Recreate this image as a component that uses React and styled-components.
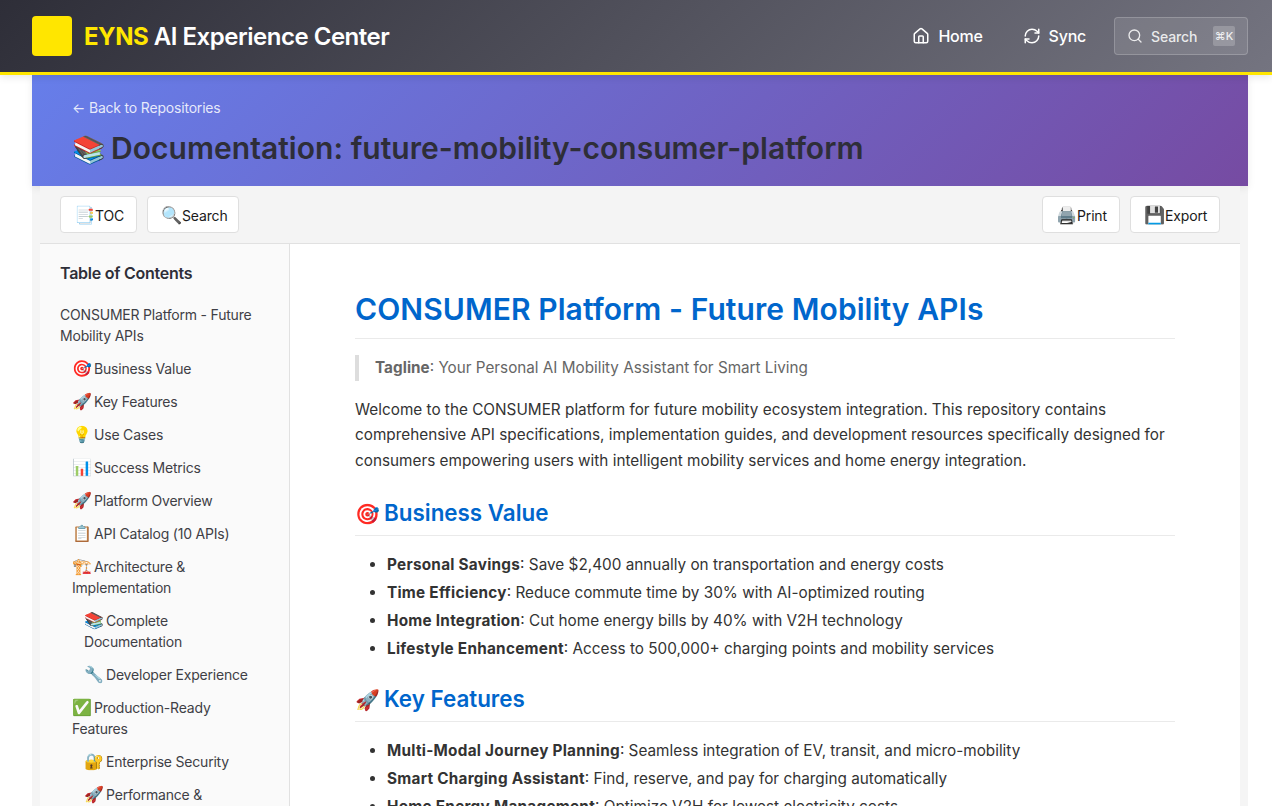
import React from "react";
import styled, { createGlobalStyle } from "styled-components";
import { Home, RefreshCw, Search } from "lucide-react";

const Global = createGlobalStyle`
  * { box-sizing: border-box; }
  html, body { margin: 0; height: 100%; overflow: hidden; background: #fff; }
  body { font-family: Inter, "Liberation Sans", sans-serif; color: #333; }
`;

const Page = styled.div`
  height: 806px;
  overflow: hidden;
`;

const TopBar = styled.header`
  position: relative;
  z-index: 2;
  height: 75px;
  padding: 0 24px 0 32px;
  display: flex;
  align-items: center;
  justify-content: space-between;
  background: linear-gradient(135deg, #2e2e38 0%, #747480 100%);
  border-bottom: 3px solid #ffe600;
  box-shadow: 0 2px 8px rgba(0, 0, 0, 0.1);
`;

const Brand = styled.div`
  display: flex;
  align-items: center;
  gap: 12px;
`;

const LogoBox = styled.div`
  width: 40px;
  height: 40px;
  border-radius: 4px;
  background: #ffe600;
`;

const BrandText = styled.div`
  font-size: 24px;
  line-height: 29px;
  margin-top: 1px;
  font-weight: 600;
  letter-spacing: -0.48px;
  color: #fff;
  span { color: #ffe600; font-weight: 700; }
`;

const Nav = styled.nav`
  display: flex;
  align-items: center;
`;

const NavLink = styled.a`
  display: flex;
  align-items: center;
  gap: 8px;
  margin-right: ${(p) => p.$gap}px;
  font-size: 16px;
  font-weight: 500;
  letter-spacing: -0.25px;
  color: #fff;
`;

const SearchBox = styled.div`
  width: 134px;
  height: 38px;
  padding: 0 12px;
  display: flex;
  align-items: center;
  gap: 8px;
  font-size: 14px;
  font-weight: 500;
  letter-spacing: -0.1px;
  color: rgba(255, 255, 255, 0.85);
  background: rgba(255, 255, 255, 0.1);
  border: 1px solid rgba(255, 255, 255, 0.2);
  border-radius: 4px;
`;

const Kbd = styled.span`
  margin-left: auto;
  width: 22px;
  height: 20px;
  display: flex;
  align-items: center;
  justify-content: center;
  font-size: 11px;
  background: rgba(255, 255, 255, 0.2);
  border-radius: 2px;
`;

const Shell = styled.main`
  margin: 0 24px 0 32px;
  background: #f5f5f5;
`;

const Hero = styled.section`
  height: 111px;
  padding: 24px 40px 0;
  background: linear-gradient(135deg, #667eea 0%, #764ba2 100%);
  box-shadow: 0 2px 8px rgba(0, 0, 0, 0.08);
`;

const BackLink = styled.a`
  display: block;
  font-size: 14px;
  line-height: 17px;
  letter-spacing: -0.19px;
  color: rgba(255, 255, 255, 0.85);
`;

const HeroTitle = styled.h1`
  margin: 13px 0 0;
  font-size: 30px;
  line-height: 39px;
  letter-spacing: 0.04px;
  font-weight: 600;
  color: #2e2e38;
`;

// emoji glyphs here are narrower than the installed colour font, so each gets its own box
const Emoji = styled.span`
  display: inline-block;
  width: ${(p) => p.$w}px;
  font-size: ${(p) => p.$s}px;
  line-height: 1;
  font-weight: 400;
  letter-spacing: 0;
`;

const DocPanel = styled.div`
  margin: 0 8px;
  background: #fff;
`;

const Toolbar = styled.div`
  height: 58px;
  padding: 10px 20px;
  display: flex;
  justify-content: space-between;
  background: #f4f4f4;
  border-bottom: 1px solid #e1e1e1;
`;

const ToolGroup = styled.div`
  display: flex;
  gap: 10px;
`;

const ToolButton = styled.button`
  width: ${(p) => p.$w}px;
  height: 37px;
  padding: 2px 0 0 12px;
  display: flex;
  align-items: center;
  font-family: inherit;
  font-size: 14px;
  letter-spacing: -0.15px;
  color: #1a1a1a;
  background: #fff;
  border: 1px solid #dfdfdf;
  border-radius: 4px;
`;

const Columns = styled.div`
  display: grid;
  grid-template-columns: 250px 1fr;
`;

const Sidebar = styled.aside`
  height: 562px;
  overflow: hidden;
  padding: 20px 24px 0 20px;
  background: #fafafa;
  border-right: 1px solid #e1e1e1;
`;

const SideTitle = styled.h3`
  margin: 0 0 21px;
  font-size: 16px;
  line-height: 19px;
  letter-spacing: -0.25px;
  font-weight: 600;
  color: #2e2e38;
`;

const TocItem = styled.a`
  display: block;
  margin-bottom: 12px;
  padding-left: ${(p) => p.$level * 12}px;
  font-size: 14px;
  line-height: 21px;
  letter-spacing: -0.2px;
  color: #3f3f46;
`;

const Article = styled.article`
  height: 562px;
  overflow: hidden;
  padding: 43px 65px 0;
  font-size: 15.32px;
  line-height: 25.6px;
  color: #333;
  strong { letter-spacing: 0.25px; }
`;

const H1 = styled.h1`
  margin: 0 0 16px;
  padding-bottom: 6px;
  font-size: 30px;
  line-height: 45px;
  letter-spacing: 0.08px;
  font-weight: 600;
  color: #0066cc;
  border-bottom: 1px solid #eaeaea;
`;

const H2 = styled.h2`
  margin: 23px 0 16px;
  padding-bottom: 6.5px;
  font-size: 22.4px;
  line-height: 30px;
  font-weight: 600;
  color: #0066cc;
  border-bottom: 1px solid #eaeaea;
`;

const Quote = styled.blockquote`
  margin: 0 0 16px;
  padding: 0 16px;
  font-size: 15.25px;
  color: #666;
  border-left: 4px solid #ddd;
  strong { letter-spacing: 0.05px; }
`;

const Para = styled.p`
  margin: 0 0 25px;
`;

const List = styled.ul`
  margin: 0 0 16px;
  padding-left: 32px;
  li { margin-top: 2.4px; }
`;

const toc = [
  [0, "", "CONSUMER Platform - Future Mobility APIs"],
  [1, "🎯", "Business Value"],
  [1, "🚀", "Key Features"],
  [1, "💡", "Use Cases"],
  [1, "📊", "Success Metrics"],
  [1, "🚀", "Platform Overview"],
  [1, "📋", "API Catalog (10 APIs)"],
  [1, "🏗️", "Architecture & Implementation"],
  [2, "📚", "Complete Documentation"],
  [2, "🔧", "Developer Experience"],
  [1, "✅", "Production-Ready Features"],
  [2, "🔐", "Enterprise Security"],
  [2, "🚀", "Performance & Reliability"],
];

export default function App() {
  return (
    <Page>
      <Global />
      <TopBar>
        <Brand>
          <LogoBox />
          <BrandText><span>EYNS</span> AI Experience Center</BrandText>
        </Brand>
        <Nav>
          <NavLink $gap={40}><Home size={18} />Home</NavLink>
          <NavLink $gap={28}><RefreshCw size={18} />Sync</NavLink>
          <SearchBox><Search size={16} />Search<Kbd>⌘K</Kbd></SearchBox>
        </Nav>
      </TopBar>
      <Shell>
        <Hero>
          <BackLink>← Back to Repositories</BackLink>
          <HeroTitle><Emoji $s={27} $w={39}>📚</Emoji>Documentation: future-mobility-consumer-platform</HeroTitle>
        </Hero>
        <DocPanel>
          <Toolbar>
            <ToolGroup>
              <ToolButton $w={77}><Emoji $s={17} $w={22}>📑</Emoji>TOC</ToolButton>
              <ToolButton $w={92}><Emoji $s={17} $w={22}>🔍</Emoji>Search</ToolButton>
            </ToolGroup>
            <ToolGroup>
              <ToolButton $w={78}><Emoji $s={17} $w={22}>🖨️</Emoji>Print</ToolButton>
              <ToolButton $w={90}><Emoji $s={17} $w={22}>💾</Emoji>Export</ToolButton>
            </ToolGroup>
          </Toolbar>
          <Columns>
            <Sidebar>
              <SideTitle>Table of Contents</SideTitle>
              {toc.map(([level, icon, text]) => (
                <TocItem key={text} $level={level}>
                  {icon && <Emoji $s={16} $w={22}>{icon}</Emoji>}
                  {text}
                </TocItem>
              ))}
            </Sidebar>
            <Article>
              <H1>CONSUMER Platform - Future Mobility APIs</H1>
              <Quote><strong>Tagline</strong>: Your Personal AI Mobility Assistant for Smart Living</Quote>
              <Para>Welcome to the CONSUMER platform for future mobility ecosystem integration. This repository contains comprehensive API specifications, implementation guides, and development resources specifically designed for consumers empowering users with intelligent mobility services and home energy integration.</Para>
              <H2><Emoji $s={20} $w={29}>🎯</Emoji>Business Value</H2>
              <List>
                <li><strong>Personal Savings</strong>: Save $2,400 annually on transportation and energy costs</li>
                <li><strong>Time Efficiency</strong>: Reduce commute time by 30% with AI-optimized routing</li>
                <li><strong>Home Integration</strong>: Cut home energy bills by 40% with V2H technology</li>
                <li><strong>Lifestyle Enhancement</strong>: Access to 500,000+ charging points and mobility services</li>
              </List>
              <H2><Emoji $s={20} $w={29}>🚀</Emoji>Key Features</H2>
              <List>
                <li><strong>Multi-Modal Journey Planning</strong>: Seamless integration of EV, transit, and micro-mobility</li>
                <li><strong>Smart Charging Assistant</strong>: Find, reserve, and pay for charging automatically</li>
                <li><strong>Home Energy Management</strong>: Optimize V2H for lowest electricity costs</li>
              </List>
            </Article>
          </Columns>
        </DocPanel>
      </Shell>
    </Page>
  );
}
